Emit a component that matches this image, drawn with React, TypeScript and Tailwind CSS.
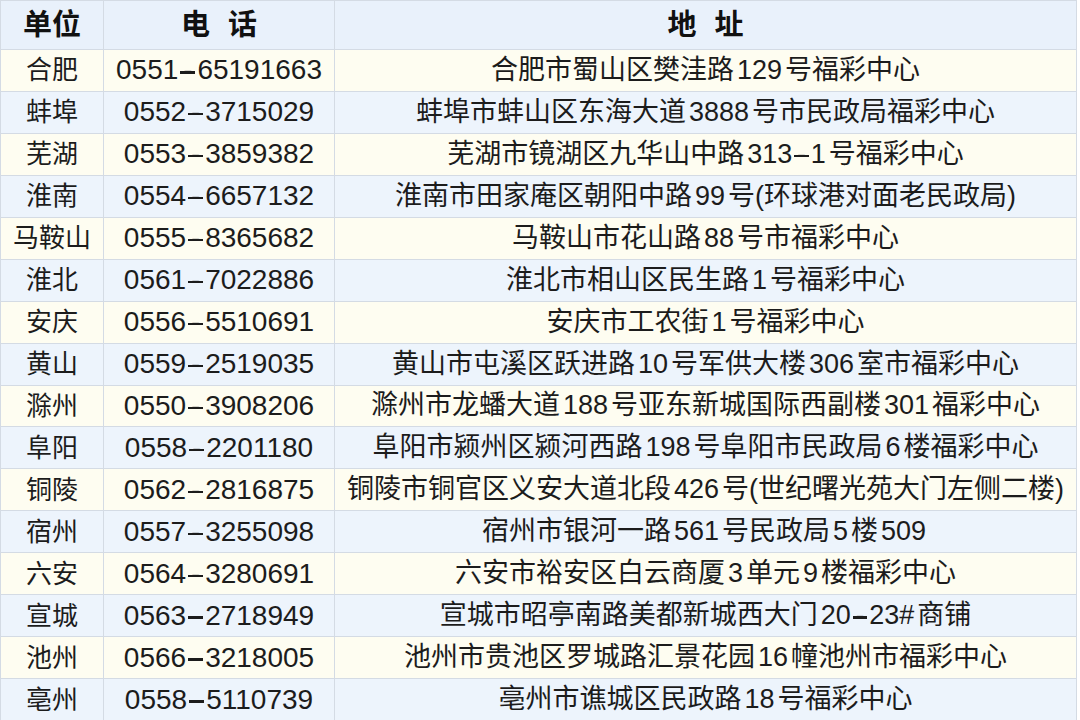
import React from "react";

const rows: [string, string, string][] = [
  ["合肥", "0551-65191663", "合肥市蜀山区樊洼路129号福彩中心"],
  ["蚌埠", "0552-3715029", "蚌埠市蚌山区东海大道3888号市民政局福彩中心"],
  ["芜湖", "0553-3859382", "芜湖市镜湖区九华山中路313-1号福彩中心"],
  ["淮南", "0554-6657132", "淮南市田家庵区朝阳中路99号(环球港对面老民政局)"],
  ["马鞍山", "0555-8365682", "马鞍山市花山路88号市福彩中心"],
  ["淮北", "0561-7022886", "淮北市相山区民生路1号福彩中心"],
  ["安庆", "0556-5510691", "安庆市工农街1号福彩中心"],
  ["黄山", "0559-2519035", "黄山市屯溪区跃进路10号军供大楼306室市福彩中心"],
  ["滁州", "0550-3908206", "滁州市龙蟠大道188号亚东新城国际西副楼301福彩中心"],
  ["阜阳", "0558-2201180", "阜阳市颍州区颍河西路198号阜阳市民政局6楼福彩中心"],
  ["铜陵", "0562-2816875", "铜陵市铜官区义安大道北段426号(世纪曙光苑大门左侧二楼)"],
  ["宿州", "0557-3255098", "宿州市银河一路561号民政局5楼509"],
  ["六安", "0564-3280691", "六安市裕安区白云商厦3单元9楼福彩中心"],
  ["宣城", "0563-2718949", "宣城市昭亭南路美都新城西大门20-23#商铺"],
  ["池州", "0566-3218005", "池州市贵池区罗城路汇景花园16幢池州市福彩中心"],
  ["亳州", "0558-5110739", "亳州市谯城区民政路18号福彩中心"],
];

function Dash() {
  return (
    <span className="relative inline-block w-[0.68em] text-center before:absolute before:left-[0.07em] before:right-[0.07em] before:top-[0.53em] before:h-[0.08em] before:bg-current before:content-['']">
      -
    </span>
  );
}

function withDashes(s: string) {
  const parts = s.split("-");
  return parts.map((p, i) => (
    <React.Fragment key={i}>
      {i > 0 && <Dash />}
      {p}
    </React.Fragment>
  ));
}

function Address({ text }: { text: string }) {
  const parts = text.split(/([0-9][0-9#\-]*)/);
  return (
    <span className="whitespace-nowrap">
      {parts.map((p, i) =>
        i % 2 === 1 ? (
          <span key={i} className="mx-[3px] text-[27px]">
            {withDashes(p)}
          </span>
        ) : (
          <React.Fragment key={i}>{p}</React.Fragment>
        )
      )}
    </span>
  );
}

export default function App() {
  return (
    <div className="w-[1080px] h-[720px] bg-white overflow-hidden font-['Liberation_Sans','Noto_Sans_CJK_SC',sans-serif] text-[#1c1c1c]">
      <div className="w-[1077px] h-[721px] grid grid-cols-[103px_231px_1fr] grid-rows-[49px_repeat(16,minmax(0,1fr))] border-l border-t border-[#d4dbe4]">
        <div className="flex items-center justify-center bg-[#e9f1fb] border-r border-b border-[#d4dbe4] text-[29px] font-bold text-[#111] leading-none">
          单位
        </div>
        <div className="flex items-center justify-center bg-[#e9f1fb] border-r border-b border-[#d4dbe4] text-[29px] font-bold text-[#111] leading-none [word-spacing:10px]">
          电 话
        </div>
        <div className="flex items-center justify-center bg-[#e9f1fb] border-r border-b border-[#d4dbe4] text-[29px] font-bold text-[#111] leading-none [word-spacing:10px]">
          地 址
        </div>
        {rows.map(([unit, phone, addr], idx) => {
          const bg = idx % 2 === 0 ? "bg-[#fefdf1]" : "bg-[#edf4fc]";
          return (
            <React.Fragment key={unit}>
              <div className={`flex items-center justify-center border-r border-b border-[#d4dbe4] text-[26px] leading-none ${bg}`}>
                {unit}
              </div>
              <div className={`flex items-center justify-center border-r border-b border-[#d4dbe4] text-[28px] leading-none ${bg}`}>
                {withDashes(phone)}
              </div>
              <div className={`flex items-center justify-center border-r border-b border-[#d4dbe4] text-[27px] leading-none ${bg}`}>
                <Address text={addr} />
              </div>
            </React.Fragment>
          );
        })}
      </div>
    </div>
  );
}
